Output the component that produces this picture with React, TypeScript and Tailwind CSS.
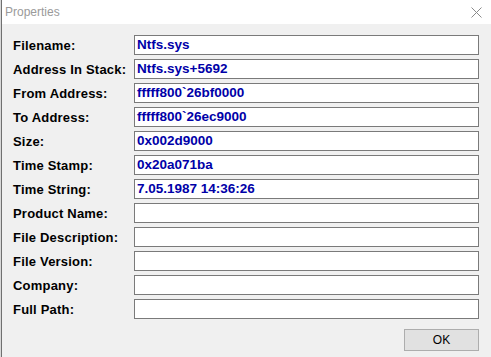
import React from "react";

const rows: [string, string][] = [
  ["Filename:", "Ntfs.sys"],
  ["Address In Stack:", "Ntfs.sys+5692"],
  ["From Address:", "fffff800`26bf0000"],
  ["To Address:", "fffff800`26ec9000"],
  ["Size:", "0x002d9000"],
  ["Time Stamp:", "0x20a071ba"],
  ["Time String:", "7.05.1987 14:36:26"],
  ["Product Name:", ""],
  ["File Description:", ""],
  ["File Version:", ""],
  ["Company:", ""],
  ["Full Path:", ""],
];

export default function App() {
  return (
    <div className="w-[491px] h-[357px] flex bg-[#f0f0f0] overflow-hidden" style={{ fontFamily: '"Liberation Sans", Arial, sans-serif' }}>
      <div className="w-[1px] h-full bg-[#d8d8d8]" />
      <div className="w-[1px] h-full bg-[#707070]" />
      <div className="flex-1 flex flex-col">
        <div className="h-[24px] bg-white flex items-center justify-between pl-[3px] pr-[9px]">
          <span className="text-[12px] text-[#9a9a9a] leading-none">Properties</span>
          <svg width="11" height="11" viewBox="0 0 11 11">
            <path d="M0.5 0.5 L10.5 10.5 M10.5 0.5 L0.5 10.5" stroke="#8a8a8a" strokeWidth="1" fill="none" />
          </svg>
        </div>
        <div className="flex-1 flex flex-col pt-[11px] pl-[11px] pr-[12px]">
          <div className="flex flex-col gap-[4px]">
            {rows.map(([label, value]) => (
              <div key={label} className="flex items-center h-[20px]">
                <div className="w-[121px] text-[13px] font-bold text-black leading-none tracking-[0.2px]">{label}</div>
                <div className="flex-1 h-[20px] border border-[#7a7a7a] bg-white flex items-center pl-[2px] text-[13.5px] font-bold text-[#0000a8] leading-none">
                  {value}
                </div>
              </div>
            ))}
          </div>
          <div className="flex justify-end mt-[10px]">
            <div className="w-[75px] h-[22px] border border-[#adadad] bg-[#e1e1e1] flex items-center justify-center text-[12px] text-black leading-none">
              OK
            </div>
          </div>
        </div>
      </div>
    </div>
  );
}
